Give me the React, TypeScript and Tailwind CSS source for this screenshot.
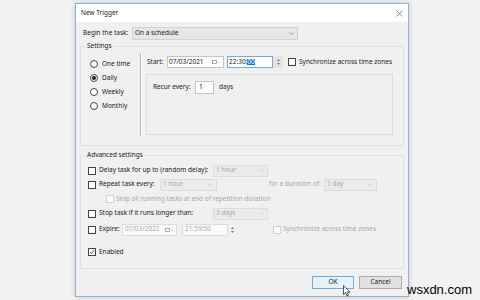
import React from "react";

function Chevron({ className = "" }: { className?: string }) {
  return (
    <svg width="5" height="3" viewBox="0 0 5 3" className={className}>
      <path d="M0.5 0.5 L2.5 2.5 L4.5 0.5" fill="none" stroke="currentColor" strokeWidth="0.8" />
    </svg>
  );
}

function CalIcon() {
  return (
    <svg width="8" height="4" viewBox="0 0 8 4" className="text-[#9a9a9a]">
      <rect x="0.5" y="0.5" width="4" height="3" fill="none" stroke="currentColor" strokeWidth="0.8" />
      <path d="M6 1.5 L7 2.5 L8 1.5" fill="none" stroke="currentColor" strokeWidth="0.7" />
    </svg>
  );
}

function Spinner({ className = "" }: { className?: string }) {
  return (
    <div className={`flex h-[12px] flex-col items-center justify-center gap-[2px] ${className}`}>
      <svg width="3" height="2" viewBox="0 0 3 2">
        <path d="M0 2 L1.5 0 L3 2 Z" fill="#777" />
      </svg>
      <svg width="3" height="2" viewBox="0 0 3 2">
        <path d="M0 0 L1.5 2 L3 0 Z" fill="#777" />
      </svg>
    </div>
  );
}

function Select({ value, className = "", disabled }: { value: string; className?: string; disabled?: boolean }) {
  return (
    <div
      className={`flex h-[12px] shrink-0 items-center justify-between border pl-[2px] pr-[3px] ${
        disabled ? "border-[#dcdcdc] bg-[#ebebeb] text-[#a8a8a8]" : "border-[#d2d2d2] bg-[#e6e6e6] text-[#222]"
      } ${className}`}
    >
      <span>{value}</span>
      <Chevron className={disabled ? "text-[#c6c6c6]" : "text-[#8a8a8a]"} />
    </div>
  );
}

function Check({ checked, disabled, className = "" }: { checked?: boolean; disabled?: boolean; className?: string }) {
  return (
    <span
      className={`flex size-[8px] shrink-0 items-center justify-center border bg-white ${
        disabled ? "border-[#d0d0d0]" : "border-[#444]"
      } ${className}`}
    >
      {checked && (
        <svg width="6" height="6" viewBox="0 0 6 6">
          <path d="M0.8 3 L2.4 4.6 L5.2 1.2" fill="none" stroke="#333" strokeWidth="0.9" />
        </svg>
      )}
    </span>
  );
}

function Radio({ checked, label }: { checked?: boolean; label: string }) {
  return (
    <div className="flex h-[14px] items-center gap-[4px]">
      <span className="flex size-[8px] items-center justify-center rounded-full border border-[#444] bg-white">
        {checked && <span className="size-[4px] rounded-full bg-[#222]" />}
      </span>
      <span>{label}</span>
    </div>
  );
}

export default function App() {
  return (
    <div className="relative h-[300px] w-[480px] overflow-hidden bg-[#f2f2f2] pt-[3px] font-['Noto_Sans',sans-serif] text-[6.5px] leading-none text-[#222]">
      <div className="ml-[75px] flex h-[294px] w-[334px] flex-col border border-[#8fb0d6] bg-[#f0f0f0] shadow-[0_0_6px_rgba(0,0,0,0.18)]">
        {/* title bar */}
        <div className="flex h-[18px] items-center justify-between bg-white pl-[5px] pr-[5px]">
          <span>New Trigger</span>
          <svg width="7" height="7" viewBox="0 0 7 7">
            <path d="M0.5 0.5 L6.5 6.5 M6.5 0.5 L0.5 6.5" stroke="#555" strokeWidth="0.7" />
          </svg>
        </div>

        <div className="mt-[5px] flex h-[13px] items-center pl-[7px]">
          <span className="w-[49px]">Begin the task:</span>
          <Select value="On a schedule" className="h-[13px] w-[166px]" />
        </div>

        {/* Settings */}
        <fieldset className="ml-[4px] mt-[2px] w-[324px] border border-[#e0e0e0] pb-[9px]">
          <legend className="ml-[5px] px-[1px] leading-[8px]">Settings</legend>
          <div className="flex h-[86px] pt-[3px]">
            <div className="flex w-[59px] flex-col pl-[9px] pt-[4px]">
              <Radio label="One time" />
              <Radio label="Daily" checked />
              <Radio label="Weekly" />
              <Radio label="Monthly" />
            </div>
            <div className="w-px bg-[#b4b4b4]" />
            <div className="w-px bg-white" />
            <div className="flex flex-1 flex-col">
              <div className="ml-[5px] mt-[3px] flex h-[12px] items-center">
                <span className="w-[20px]">Start:</span>
                <div className="flex h-[12px] w-[57px] items-center justify-between border border-[#c4c4c4] bg-white pl-[1px] pr-[3px]">
                  <span>07/03/2021</span>
                  <CalIcon />
                </div>
                <div className="ml-[3px] flex h-[12px] w-[46px] items-center border border-[#7aa7d8] bg-white pl-[1px]">
                  <span>22:30:</span>
                  <span className="bg-[#0078d7] text-white">00</span>
                </div>
                <Spinner className="w-[10px] bg-[#e4e4e4]" />
                <Check className="ml-[5px]" />
                <span className="ml-[3px]">Synchronize across time zones</span>
              </div>
              <div className="ml-[4px] mt-[6px] h-[61px] w-[247px] border border-[#dcdcdc] pl-[6px] pt-[6px]">
                <div className="flex h-[13px] items-center">
                  <span className="w-[42px]">Recur every:</span>
                  <div className="flex h-[13px] w-[19px] items-center border border-[#c4c4c4] bg-white pl-[3px]">1</div>
                  <span className="ml-[5px]">days</span>
                </div>
              </div>
            </div>
          </div>
        </fieldset>

        {/* Advanced settings */}
        <fieldset className="ml-[4px] mt-[5px] w-[324px] border border-[#e0e0e0] pb-[10px] pl-[7px] pt-[5px]">
          <legend className="-ml-[2px] px-[1px] leading-[8px]">Advanced settings</legend>
          <div className="flex h-[13px] items-center">
            <Check />
            <span className="ml-[3px] w-[114px]">Delay task for up to (random delay):</span>
            <Select value="1 hour" className="w-[55px]" disabled />
          </div>
          <div className="mt-[1px] flex h-[13px] items-center">
            <Check />
            <span className="ml-[3px] w-[61px]">Repeat task every:</span>
            <Select value="1 hour" className="w-[57px]" disabled />
            <span className="ml-[52px] w-[55px] text-[#a8a8a8]">for a duration of:</span>
            <Select value="1 day" className="w-[53px]" disabled />
          </div>
          <div className="mt-[2px] flex h-[12px] items-center">
            <Check disabled className="ml-[18px]" />
            <span className="ml-[2px] text-[#a8a8a8]">Stop all running tasks at end of repetition duration</span>
          </div>
          <div className="mt-[2px] flex h-[13px] items-center">
            <Check />
            <span className="ml-[3px] w-[114px]">Stop task if it runs longer than:</span>
            <Select value="3 days" className="w-[55px]" disabled />
          </div>
          <div className="mt-[3px] flex h-[13px] items-center">
            <Check />
            <span className="ml-[3px] w-[23px]">Expire:</span>
            <div className="flex h-[12px] w-[55px] items-center justify-between border border-[#dcdcdc] bg-[#fafafa] pl-[2px] pr-[3px] text-[#a8a8a8]">
              <span>07/03/2022</span>
              <CalIcon />
            </div>
            <div className="ml-[5px] flex h-[12px] w-[46px] items-center border border-[#dcdcdc] bg-[#fafafa] pl-[2px] text-[#a8a8a8]">
              21:59:50
            </div>
            <Spinner className="w-[8px]" />
            <Check disabled className="ml-[37px]" />
            <span className="ml-[2px] text-[#a8a8a8]">Synchronize across time zones</span>
          </div>
          <div className="mt-[10px] flex h-[12px] items-center">
            <Check checked />
            <span className="ml-[3px]">Enabled</span>
          </div>
        </fieldset>

        <div className="mt-[7px] flex justify-end gap-[5px] pr-[6px]">
          <button className="flex h-[13px] w-[42px] items-center justify-center border border-[#6fa9e0] bg-[#e5f1fb]">
            OK
          </button>
          <button className="flex h-[13px] w-[43px] items-center justify-center border border-[#adadad] bg-[#e1e1e1]">
            Cancel
          </button>
        </div>
      </div>

      {/* mouse cursor */}
      <svg width="8" height="12" viewBox="0 0 8 12" className="absolute left-[343px] top-[285px]">
        <path d="M0.5 0.5 L0.5 9.5 L2.6 7.6 L4 11 L5.4 10.4 L4 7.2 L7 7.2 Z" fill="white" stroke="#111" strokeWidth="0.7" />
      </svg>

      {/* watermark */}
      <span className="absolute left-[407px] top-[283px] font-['Liberation_Sans',sans-serif] text-[13px] leading-[14px] text-black">
        wsxdn.com
      </span>
    </div>
  );
}
